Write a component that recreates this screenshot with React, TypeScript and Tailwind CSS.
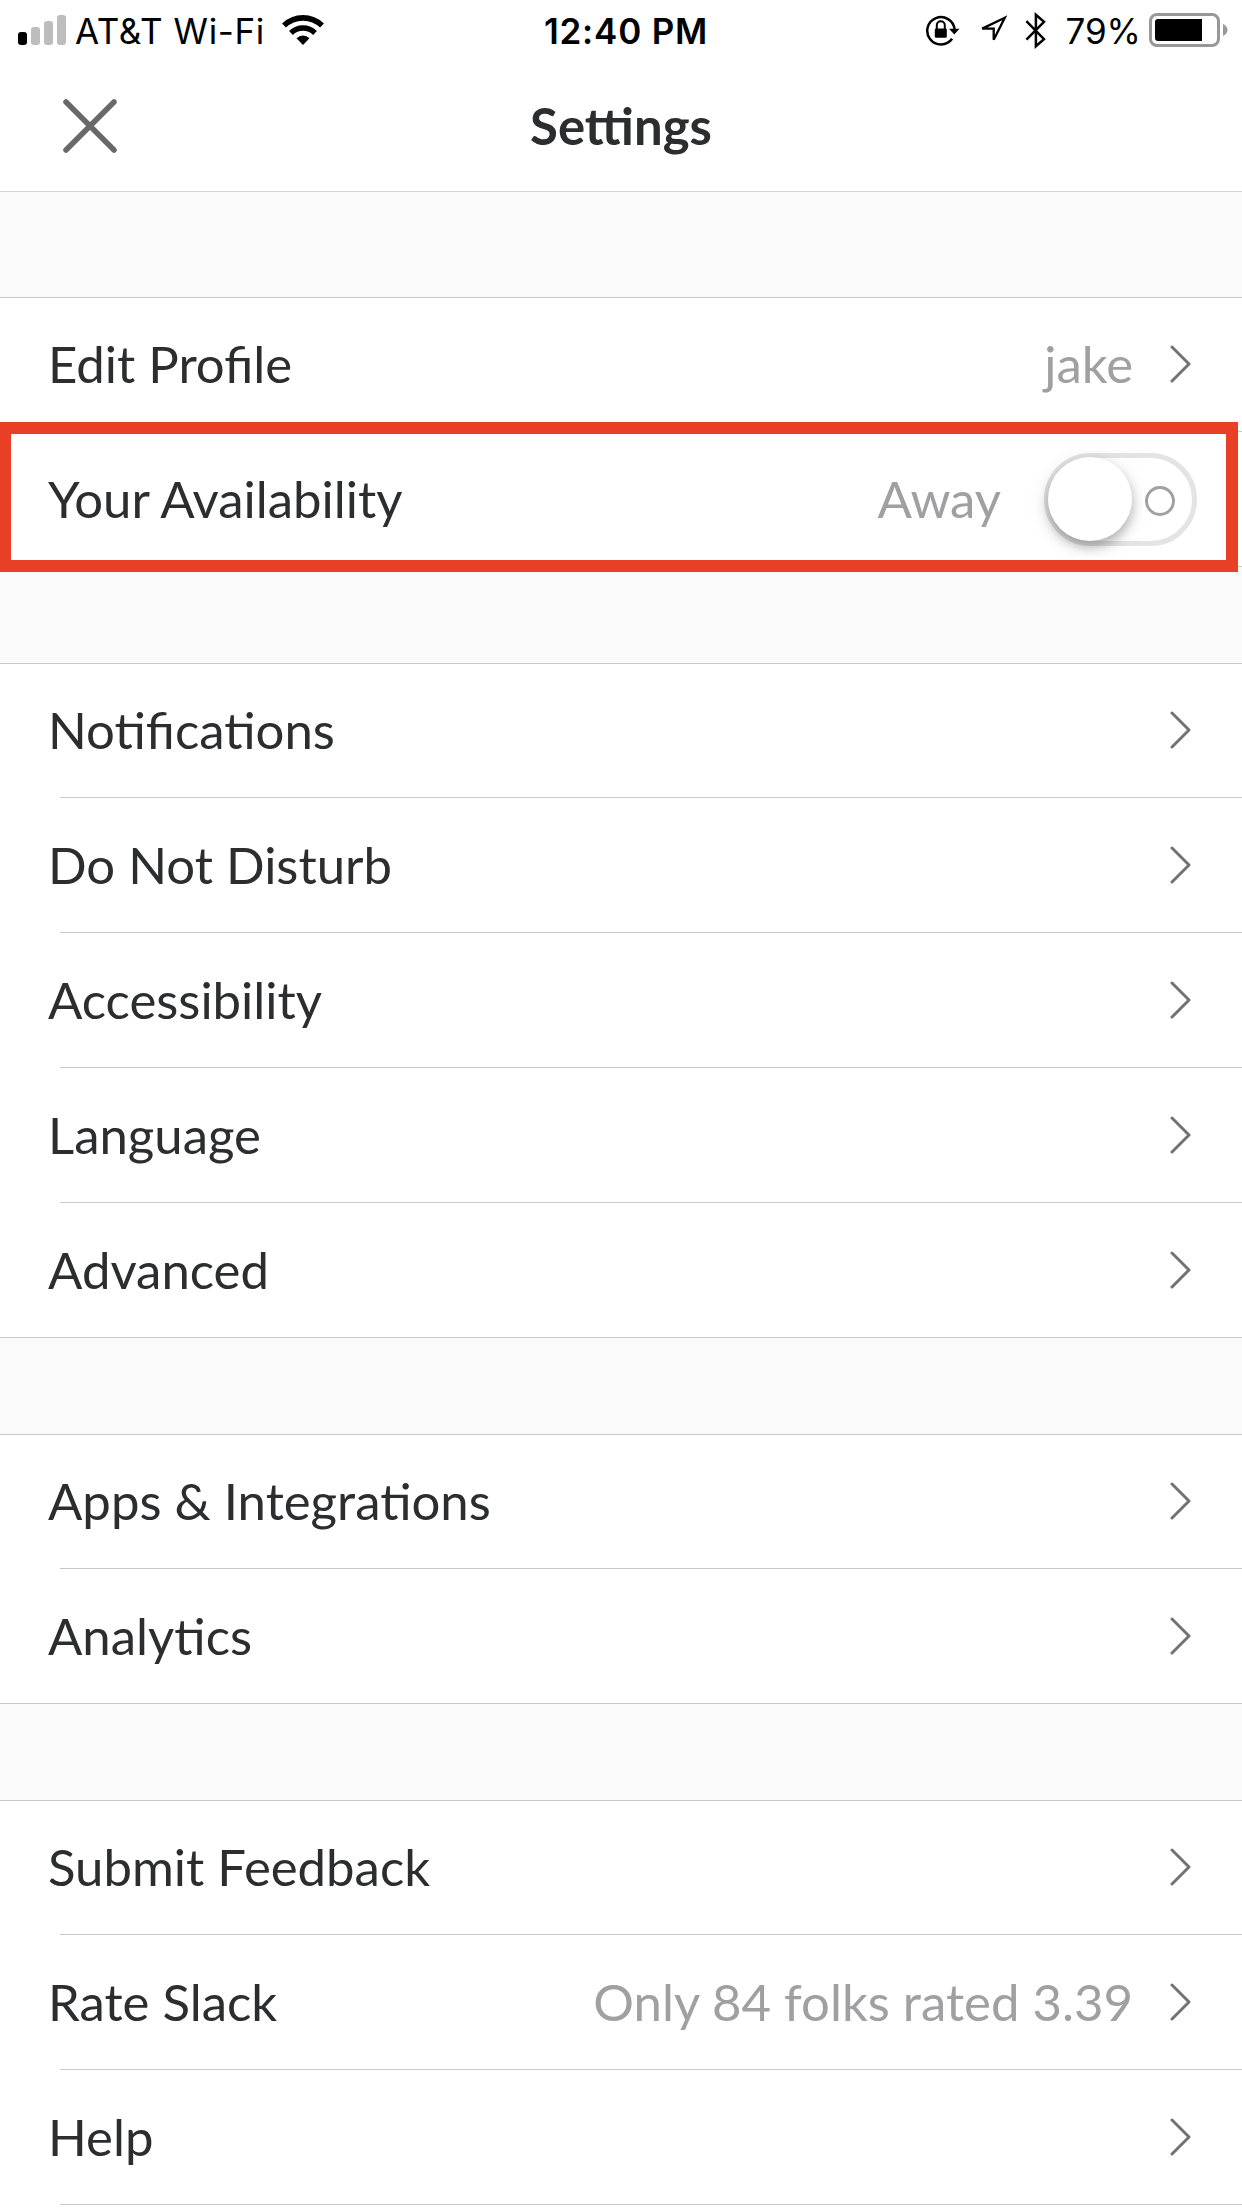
import { useState } from "react";

type Item = {
  label: string;
  value?: string;
  toggle?: boolean;
};

const GROUPS: Item[][] = [
  [
    { label: "Edit Profile", value: "jake" },
    { label: "Your Availability", toggle: true },
  ],
  [
    { label: "Notifications" },
    { label: "Do Not Disturb" },
    { label: "Accessibility" },
    { label: "Language" },
    { label: "Advanced" },
  ],
  [{ label: "Apps & Integrations" }, { label: "Analytics" }],
  [
    { label: "Submit Feedback" },
    { label: "Rate Slack", value: "Only 84 folks rated 3.39" },
    { label: "Help" },
  ],
];

function SignalBars() {
  return (
    <div className="flex items-end gap-1 h-[30px]">
      <div className="w-[9px] h-[13px] rounded-[3px] bg-black" />
      <div className="w-[9px] h-[18px] rounded-[3px] bg-[#bdbdbd]" />
      <div className="w-[9px] h-[24px] rounded-[3px] bg-[#bdbdbd]" />
      <div className="w-[9px] h-[30px] rounded-[3px] bg-[#bdbdbd]" />
    </div>
  );
}

function WifiIcon() {
  return (
    <svg width="42" height="30" viewBox="0 0 42 30" fill="none" stroke="#000">
      <path d="M2 10.6A27.2 27.2 0 0 1 40 10.6" strokeWidth="5.6" />
      <path d="M9 18A17 17 0 0 1 33 18" strokeWidth="5.4" />
      <path d="M14.5 23.2A9.2 9.2 0 0 1 27.5 23.2L21 30Z" fill="#000" stroke="none" />
    </svg>
  );
}

function RotationLockIcon() {
  return (
    <svg width="36" height="32" viewBox="0 0 36 32" fill="none">
      <path d="M27.1 24.8A13.7 13.7 0 1 1 29.6 15.5" stroke="#000" strokeWidth="2.5" />
      <path d="M24 14.8H34.5L29.3 20.6Z" fill="#000" />
      <rect x="9.8" y="14.4" width="12" height="9.4" rx="1.4" fill="#000" />
      <path d="M11.8 15V11.2A4 4 0 0 1 19.8 11.2V15" stroke="#000" strokeWidth="2" />
    </svg>
  );
}

function LocationIcon() {
  return (
    <svg width="30" height="30" viewBox="0 0 30 30" fill="none">
      <path d="M26.8 2.8L4.2 13.6H15.7V24.8Z" stroke="#000" strokeWidth="2.3" />
    </svg>
  );
}

function BluetoothIcon() {
  return (
    <svg width="22" height="37" viewBox="0 0 22 37" fill="none">
      <path d="M1.4 9.2L19 27.2L10.9 34.2V2.8L19 9.9L1.4 27.6" stroke="#000" strokeWidth="2.5" />
    </svg>
  );
}

function Battery() {
  return (
    <div className="flex items-center">
      <div className="w-[71px] h-[34px] rounded-[8px] border-3 border-[#989898] p-[3px]">
        <div className="w-[47px] h-[22px] rounded-l-[3px] bg-black" />
      </div>
      <svg className="ml-[3px]" width="5" height="12" viewBox="0 0 5 12">
        <path d="M0 0C6 3 6 9 0 12Z" fill="#989898" />
      </svg>
    </div>
  );
}

function StatusBar() {
  return (
    <div className="h-[60px] grid grid-cols-3 items-center text-black text-[35px] leading-[58px] font-['Inter',sans-serif]">
      <div className="flex items-center pl-[18px]">
        <SignalBars />
        <span className="pt-[2px] ml-[9px] tracking-[0.6px] whitespace-nowrap">AT&amp;T Wi-Fi</span>
        <div className="ml-[17px]">
          <WifiIcon />
        </div>
      </div>
      <div className="pt-[2px] text-center font-semibold tracking-[0.8px] pl-[10px] whitespace-nowrap">12:40 PM</div>
      <div className="flex items-center justify-end pr-[14px]">
        <RotationLockIcon />
        <div className="ml-[17px]">
          <LocationIcon />
        </div>
        <div className="ml-[17px]">
          <BluetoothIcon />
        </div>
        <span className="pt-[2px] ml-[18px]">79%</span>
        <div className="ml-[8px]">
          <Battery />
        </div>
      </div>
    </div>
  );
}

function Chevron() {
  return (
    <svg width="22" height="38" viewBox="0 0 22 38" fill="none">
      <path
        d="M2 2L19 19L2 36"
        stroke="#717274"
        strokeWidth="3"
        strokeLinecap="round"
        strokeLinejoin="round"
      />
    </svg>
  );
}

function AvailabilityToggle({ on, onChange }: { on: boolean; onChange: () => void }) {
  return (
    <button
      role="switch"
      aria-checked={on}
      aria-label="Availability"
      onClick={onChange}
      className={`w-[153px] h-[93px] rounded-full border-5 border-[#e4e4e4] bg-white flex items-center justify-between ${
        on ? "flex-row-reverse" : ""
      }`}
    >
      <span className="w-[84px] h-[84px] -ml-px shrink-0 rounded-full bg-white shadow-[0_6px_12px_rgba(0,0,0,0.28),0_4px_26px_rgba(0,0,0,0.08)]" />
      <span className="w-[30px] h-[30px] mx-[17px] mt-[3px] -ml-1 shrink-0 rounded-full border-3 border-[#a0a0a2]" />
    </button>
  );
}

export default function App() {
  const [active, setActive] = useState(false);

  return (
    <div className="w-full h-[2208px] overflow-hidden bg-[#fafafa] text-[#2c2d2e] text-[50.9px] leading-[60px] font-['Lato',sans-serif]">
      {/* Header */}
      <header className="bg-white border-b border-[#d5d5d5]">
        <StatusBar />
        <div className="h-[131px] grid grid-cols-3 items-center">
          <button aria-label="Close" className="ml-[63px] w-[54px] h-[54px]">
            <svg width="54" height="54" viewBox="0 0 54 54" fill="none">
              <path d="M3 3L51 51M51 3L3 51" stroke="#686868" strokeWidth="5.5" strokeLinecap="round" />
            </svg>
          </button>
          <h1 className="pt-px text-center font-bold">Settings</h1>
        </div>
      </header>

      <main className="pt-[105px] flex flex-col gap-[96px]">
        {GROUPS.map((items, g) => (
          <section key={g} className="bg-white border-t border-[#c8c8c8]">
            {items.map((item, i) => {
              const last = i === items.length - 1 && g !== GROUPS.length - 1;
              return (
                <div key={item.label} className="relative">
                  <div
                    className={`flex items-center pl-[48px] pr-[50px] ${i === 0 ? "h-[133px] pb-[2px]" : "h-[134px]"}`}
                  >
                    <span className="flex-1">{item.label}</span>
                    {item.toggle ? (
                      <div className="flex items-center gap-[43px] -mr-[5px]">
                        <span className="text-[#a0a0a2]">{active ? "Active" : "Away"}</span>
                        <AvailabilityToggle on={active} onChange={() => setActive(!active)} />
                      </div>
                    ) : (
                      <div className="flex items-center gap-[37px]">
                        <span className="text-[#a0a0a2]">{item.value}</span>
                        <Chevron />
                      </div>
                    )}
                  </div>
                  <div className={last ? "h-px bg-[#c8c8c8]" : "h-px bg-[#c8c8c8] ml-[60px]"} />

                  {/* Callout around the availability row */}
                  {item.toggle && (
                    <div className="absolute left-0 -top-[10px] w-[1238px] h-[150px] border-12 border-l-11 border-[#e93f26] pointer-events-none" />
                  )}
                </div>
              );
            })}
          </section>
        ))}
        <div className="-mt-[96px] h-[3px] shrink-0 bg-white" />
      </main>
    </div>
  );
}
